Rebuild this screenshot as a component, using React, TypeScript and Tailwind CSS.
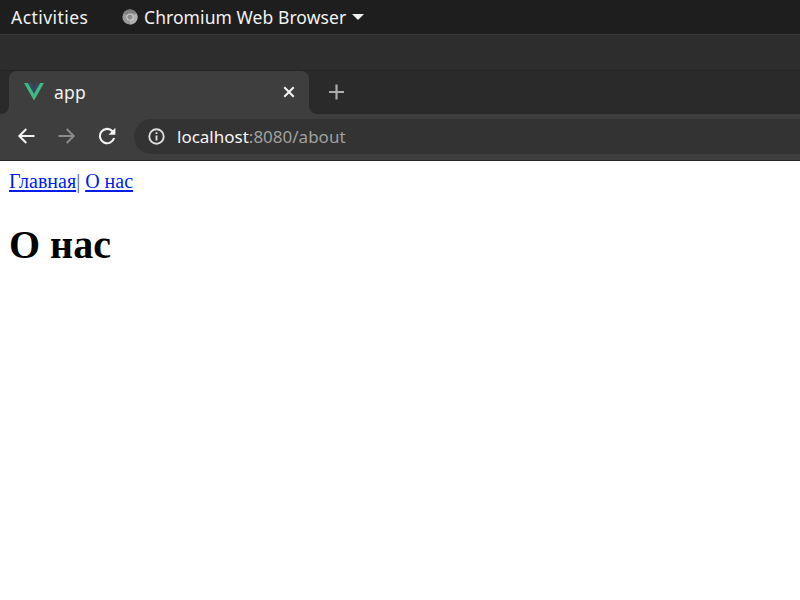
import React from "react";

function ChromiumIcon() {
  return (
    <svg className="h-4 w-4 shrink-0" viewBox="0 0 16 16">
      <circle cx="8" cy="8" r="7.6" fill="#9a9a9a" />
      <path d="M8 8 1.4 4.2A7.6 7.6 0 0 1 14.7 4.5H8Z" fill="#808080" />
      <path d="M8 8 14.7 4.5A7.6 7.6 0 0 1 8 15.6Z" fill="#b0b0b0" />
      <circle cx="8" cy="8" r="3.6" fill="#d2d2d2" />
      <circle cx="8" cy="8" r="2.6" fill="#8c8c8c" />
    </svg>
  );
}

function DesktopBar() {
  return (
    <header className="flex h-[35px] items-center border-b border-[#3b3b3b] bg-[#1e1e1e] pl-[11px] text-[17.5px] leading-[34px] text-[#f2f2f2]">
      <span className="w-[111px] whitespace-nowrap tracking-[0.45px]">Activities</span>
      <ChromiumIcon />
      <span className="ml-1.5 w-[208px] whitespace-nowrap tracking-[0.07px]">Chromium Web Browser</span>
      <svg className="h-1.5 w-3" viewBox="0 0 12 6">
        <path d="M0 0H12L6 6Z" fill="#f2f2f2" />
      </svg>
    </header>
  );
}

function TabStrip() {
  return (
    <div className="flex h-[43px] bg-[#2a2a2a]">
      <div className="flex w-[9px] items-end bg-[#3e3e3e]">
        <div className="h-full w-full rounded-br-[8px] bg-[#2a2a2a]" />
      </div>
      <div className="flex w-[300px] items-center rounded-t-[8px] bg-[#3e3e3e] pb-0.5 pl-[15px]">
        <svg className="h-[18px] w-5" viewBox="0 0 20 18">
          <path d="M0 0H4L10 10.4 16 0H20L10 17.5Z" fill="#41b883" />
          <path d="M4 0H7.8L10 3.8 12.2 0H16L10 10.4Z" fill="#35495e" />
        </svg>
        <span className="ml-2.5 w-[229px] pt-0.5 text-[17.5px] leading-[39px] tracking-[0.2px] text-[#f2f2f2]">app</span>
        <svg className="h-3 w-3" viewBox="0 0 12 12">
          <path d="M1.3 1.3 10.7 10.7M10.7 1.3 1.3 10.7" stroke="#f5f5f5" strokeWidth="2" />
        </svg>
      </div>
      <div className="flex flex-1 bg-[#3e3e3e]">
        <div className="flex flex-1 items-center rounded-bl-[8px] bg-[#2a2a2a] pb-0.5 pl-5">
          <svg className="h-4 w-4" viewBox="0 0 16 16">
            <path d="M7.5 .5V15.5M0 8H15" stroke="#adadad" strokeWidth="2.2" />
          </svg>
        </div>
      </div>
    </div>
  );
}

function Toolbar() {
  return (
    <div className="flex h-[47px] items-start border-b border-[#242424] bg-[#3e3e3e] pt-[5px] pl-[18px]">
      <div className="flex h-[35px] w-[116px] items-center gap-6 pb-px">
        <svg className="h-4 w-4 overflow-visible" viewBox="0 0 16 16" fill="none" stroke="#f4f4f4" strokeWidth="2">
          <path d="M16.5 8H2M8.3 1 1.3 8 8.3 15" />
        </svg>
        <svg className="h-4 w-4 overflow-visible" viewBox="0 0 16 16" fill="none" stroke="#8b8b8b" strokeWidth="2">
          <path d="M.5 8H15.5M8.7 1 15.7 8 8.7 15" />
        </svg>
        <svg className="h-[18px] w-[18px]" viewBox="0 0 18 18">
          <path d="M14.5 4.2A7.2 7.2 0 1 0 16.1 11" fill="none" stroke="#f4f4f4" strokeWidth="2.1" />
          <path d="M17.4 .8V7.7H10.5Z" fill="#f4f4f4" />
        </svg>
      </div>
      <div className="flex h-[35px] flex-1 items-center rounded-l-full bg-[#333333] pl-3.5">
        <svg className="h-[17px] w-[17px]" viewBox="0 0 17 17">
          <circle cx="8.5" cy="8.5" r="7.2" fill="none" stroke="#dedede" strokeWidth="1.9" />
          <path d="M8.5 7.6V12.6M8.5 4.3V6.1" stroke="#dedede" strokeWidth="1.9" />
        </svg>
        <span className="ml-3 whitespace-nowrap text-[17px] leading-[35px] text-[#a0a0a0]">
          <span className="text-[#f5f5f5]">localhost</span>:8080/about
        </span>
      </div>
    </div>
  );
}

export default function App() {
  return (
    <div className="flex h-[600px] w-[800px] flex-col overflow-hidden bg-white font-['Noto_Sans','Open_Sans',sans-serif]">
      <DesktopBar />
      <div className="h-9 border-b border-[#252525] bg-[#2d2d2d]" />
      <TabStrip />
      <Toolbar />
      <main className="px-[9px] pt-2 font-['Liberation_Serif',serif] text-black">
        <nav className="text-[20px] leading-6">
          <a className="text-[#001ee8] underline decoration-2 underline-offset-2">Главная</a>
          <span className="text-[#555588]">|</span>{" "}
          <a className="text-[#001ee8] underline decoration-2 underline-offset-2">О нас</a>
        </nav>
        <h1 className="mt-7 text-[40px] font-bold leading-[48px]">О нас</h1>
      </main>
    </div>
  );
}
